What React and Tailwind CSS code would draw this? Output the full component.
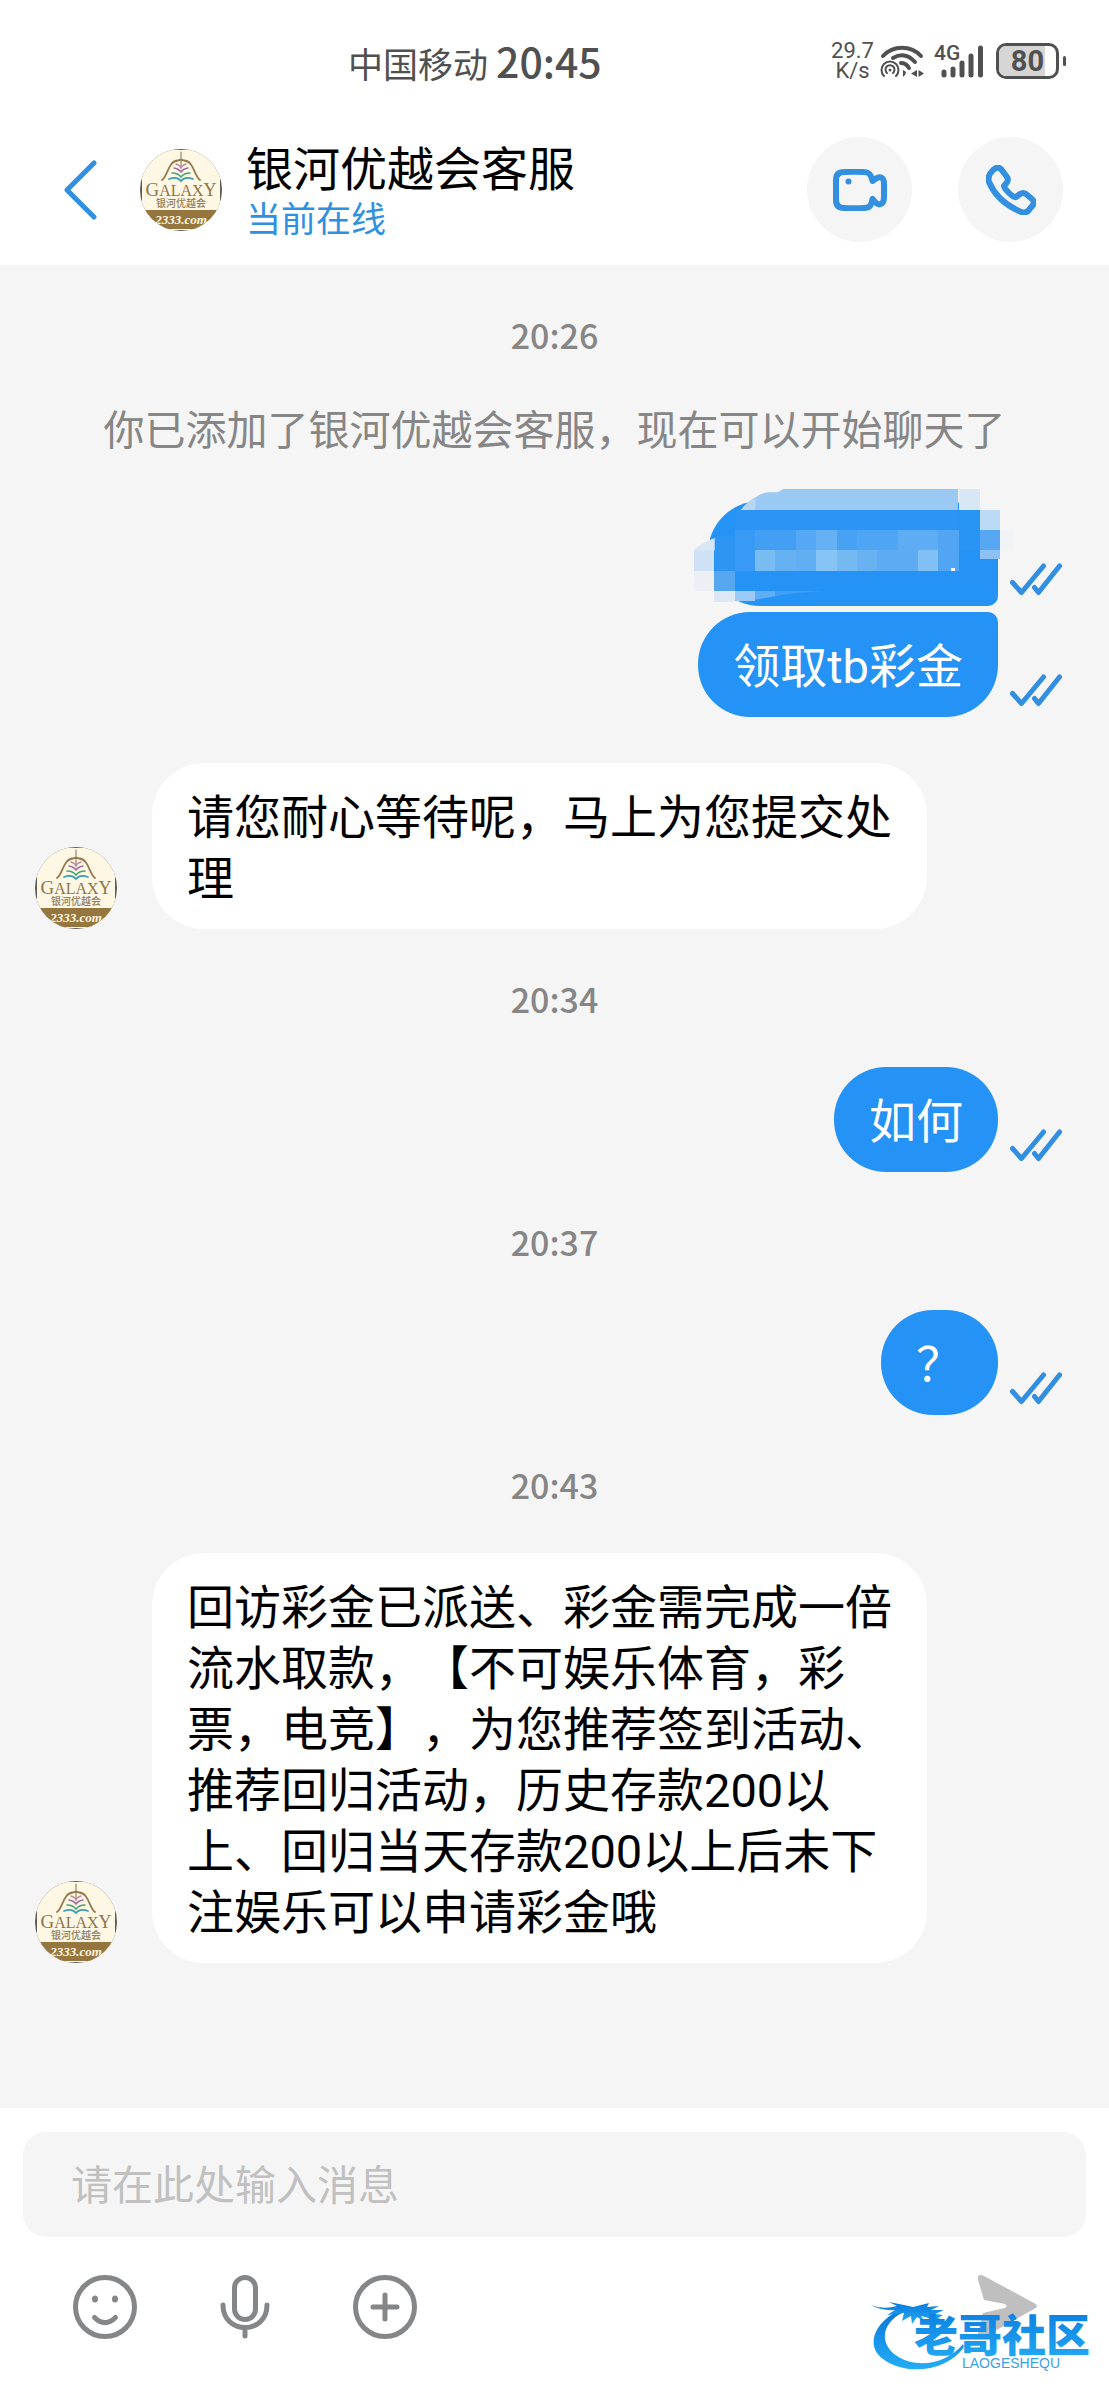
import { useId, useState } from 'react'

const contact = {
  name: '银河优越会客服',
  status: '当前在线',
}

const messages = [
  { id: 1, type: 'time', text: '20:26', gap: 'mt-[46px]' },
  { id: 2, type: 'system', text: '你已添加了银河优越会客服，现在可以开始聊天了', gap: 'mt-[38px]' },
  { id: 3, type: 'hidden', gap: 'mt-11' },
  { id: 4, type: 'out', text: '领取tb彩金', gap: 'mt-1.5', shape: 'rounded-[52px] rounded-tr-[10px]' },
  { id: 5, type: 'in', text: '请您耐心等待呢，马上为您提交处理', gap: 'mt-[46px]' },
  { id: 6, type: 'time', text: '20:34', gap: 'mt-[46px]' },
  { id: 7, type: 'out', text: '如何', gap: 'mt-11', shape: 'rounded-[52px]' },
  { id: 8, type: 'time', text: '20:37', gap: 'mt-[46px]' },
  { id: 9, type: 'out', text: '？', gap: 'mt-11', shape: 'rounded-[52px]' },
  { id: 10, type: 'time', text: '20:43', gap: 'mt-[46px]' },
  {
    id: 11,
    type: 'in',
    text: '回访彩金已派送、彩金需完成一倍流水取款，【不可娱乐体育，彩票，电竞】，为您推荐签到活动、推荐回归活动，历史存款200以上、回归当天存款200以上后未下注娱乐可以申请彩金哦',
    gap: 'mt-11',
  },
]

// [x, y, width, height, colour]
const mosaic = [
  [195, 18, 610, 63, '#9ac9f3'],
  [807, 18, 63, 63, '#d7e7f6'],
  [870, 81, 60, 61, '#bbdaf5'],
  [870, 142, 60, 60, '#58a7f2'],
  [870, 202, 60, 27, '#8dc1f3'],
  [930, 142, 40, 60, '#f0f4f7'],
  [12, 202, 61, 61, '#cfe1f5'],
  [12, 263, 61, 61, '#eceff3'],
  [73, 263, 61, 61, '#56a6f0'],
  [73, 324, 61, 33, '#dce8f5'],
  [134, 324, 61, 30, '#9ccaf4'],
  [134, 81, 671, 61, '#2b94f4'],
  [134, 142, 61, 121, '#389af4'],
  [195, 142, 122, 60, '#429ff4'],
  [317, 142, 62, 60, '#55a8f3'],
  [379, 142, 61, 60, '#66b1f4'],
  [440, 142, 61, 60, '#47a2f4'],
  [501, 142, 122, 60, '#4ea5f4'],
  [623, 142, 122, 60, '#5eadf4'],
  [745, 142, 62, 121, '#51a5f2'],
  [195, 202, 61, 61, '#79bcf2'],
  [256, 202, 61, 61, '#66b1f1'],
  [317, 202, 62, 61, '#61aff2'],
  [379, 202, 61, 61, '#86c4f5'],
  [440, 202, 61, 61, '#75b9f3'],
  [501, 202, 61, 61, '#69b2f1'],
  [562, 202, 122, 61, '#5dabf2'],
  [684, 202, 61, 61, '#80c0f4'],
]

function Avatar() {
  const clip = useId()
  return (
    <svg viewBox="0 0 82 82" className="size-[82px] shrink-0" role="img" aria-label={contact.name}>
      <defs>
        <clipPath id={clip}>
          <circle cx="41" cy="41" r="41" />
        </clipPath>
      </defs>
      <g clipPath={`url(#${clip})`}>
        <rect width="82" height="82" fill="#5d5a52" />
        <rect x="2" y="1" width="78" height="80" fill="#fdf7e4" />
        <rect x="2" y="61" width="78" height="19" fill="#96763f" />
        <g fill="none" strokeLinecap="round">
          <path d="M41 3V17" stroke="#9b8260" strokeWidth="1.2" />
          <path d="M22 31C28 27 28 12 38 11.500Q41 10 44 11.500C54 12 54 27 60 31" stroke="#94794f" strokeWidth="1.800" />
          <path d="M36 15Q40 16 41 19Q42 16 46 15" stroke="#b88aa0" strokeWidth="1.300" />
          <path d="M34 19Q39 20 41 23Q43 20 48 19" stroke="#a4679c" strokeWidth="1.400" />
          <path d="M32 24Q38 24 41 28Q44 24 50 24" stroke="#44a678" strokeWidth="1.600" />
          <path d="M29 30Q37 27 41 32Q45 27 53 30" stroke="#3a9fb4" strokeWidth="1.800" />
        </g>
        <text x="41" y="47" textAnchor="middle" fontFamily="Liberation Serif, serif" fill="#8f744a">
          <tspan fontSize="19">G</tspan>
          <tspan fontSize="16">ALAX</tspan>
          <tspan fontSize="18">Y</tspan>
        </text>
        <text x="41" y="58" textAnchor="middle" fontSize="10" fontWeight="500" fontFamily="Noto Sans CJK SC, sans-serif" fill="#937d5e">
          银河优越会
        </text>
        <text x="41" y="75" textAnchor="middle" fontSize="13" fontWeight="700" fontStyle="italic" fontFamily="Liberation Serif, serif" fill="#fff6df">
          2333.com
        </text>
      </g>
    </svg>
  )
}

function ReadTicks() {
  return (
    <svg viewBox="0 0 52 33" className="mb-2.5 w-[52px] h-[33px] shrink-0" fill="none" stroke="#318ee0" strokeWidth="5" strokeLinecap="round" strokeLinejoin="round">
      <path d="M2.500 19.500L11.500 29.500L33.500 3" />
      <path d="M24.500 24.500L28.500 29.500L49.500 3" />
    </svg>
  )
}

function HiddenBubble() {
  return (
    <div className="relative w-[290px] h-[105px] rounded-[52px] rounded-br-[10px] bg-[#2593f5]">
      <svg viewBox="0 0 981 381" className="absolute -left-[18px] -top-[18px] w-[327px] h-[127px]" shapeRendering="crispEdges">
        <rect x="200" y="81" width="670" height="120" fill="#2894f4" />
        <rect x="870" y="202" width="53" height="60" fill="#2593f5" />
        <rect x="74" y="160" width="70" height="105" fill="#2f95f3" />
        {mosaic.map(([x, y, w, h, fill]) => (
          <rect key={`${x}-${y}`} x={x} y={y} width={w} height={h} fill={fill} />
        ))}
        <g shapeRendering="auto">
          <path d="M193 16V46Q215 27 240 28L262 28L285 16Z" fill="#f5f5f5" />
          <path d="M152 81Q172 55 196 42V81Z" fill="#b6d6f4" />
          <path d="M12 202Q35 178 74 165V202Z" fill="#d9e6f3" />
          <path d="M195 324H256V340L195 350Z" fill="#5fadf4" />
          <path d="M256 324H400L315 330L256 340Z" fill="#3f9ff5" />
        </g>
        <rect x="782" y="254" width="12" height="11" fill="#f3f8fc" />
      </svg>
    </div>
  )
}

function Message({ message }) {
  const { type, text, gap, shape } = message

  if (type === 'time') {
    return <time className={`${gap} block text-center text-[34px] leading-[48px] font-medium text-[#868686]`}>{text}</time>
  }

  if (type === 'system') {
    return <p className={`${gap} text-center text-[41px] leading-[60px] text-[#868686]`}>{text}</p>
  }

  if (type === 'in') {
    return (
      <div className={`${gap} flex items-end gap-[35px] pl-[35px]`}>
        <Avatar />
        <p className="max-w-[775px] rounded-[52px] bg-white px-[35px] pt-6 pb-5 font-[Roboto,'Noto_Sans_CJK_SC',sans-serif] text-[47px] leading-[61px] text-black">
          {text}
        </p>
      </div>
    )
  }

  return (
    <div className={`${gap} flex items-end justify-end gap-3 pr-[47px]`}>
      {type === 'hidden' ? (
        <HiddenBubble />
      ) : (
        <p className={`${shape} bg-[#2593f5] px-[35px] pt-6 pb-5 font-[Roboto,'Noto_Sans_CJK_SC',sans-serif] text-[47px] leading-[61px] text-white`}>
          {text}
        </p>
      )}
      <ReadTicks />
    </div>
  )
}

function StatusBar() {
  return (
    <div className="relative h-[122px] flex items-center justify-end pr-[43px] text-[#505050]">
      <div className="absolute left-[348px] flex items-baseline gap-2">
        <span className="text-[35px] leading-[60px]">中国移动</span>
        <span className="text-[41px] leading-[60px] font-medium">20:45</span>
      </div>

      <div className="flex items-center">
        <div className="mr-1.5 text-center font-[Roboto,sans-serif] text-[22px] leading-5">
          <div>29.7</div>
          <div>K/s</div>
        </div>

        {/* Wifi with hotspot */}
        <svg viewBox="0 0 44 34" className="mr-2.5 w-11 h-[34px]" fill="none" stroke="currentColor" strokeLinecap="round">
          <path d="M3 12C13 1 31 1 41 12" strokeWidth="4" />
          <path d="M13 14Q25 7 35 18" strokeWidth="4" />
          <path d="M21 19Q26 19 29 24" strokeWidth="4" />
          <path d="M4 32A8.500 8.500 0 1 1 16 32" strokeWidth="2" />
          <path d="M7 29A4.500 4.500 0 1 1 13 29" strokeWidth="2" />
          <circle cx="10" cy="26" r="1.500" fill="currentColor" stroke="none" />
          <path d="M23 26Q29 28 23 33ZM37 26V33L31 29.500ZM38.500 26L44 29.500L38.500 33Z" fill="currentColor" stroke="none" />
        </svg>

        <div className="relative mr-3 w-[50px] h-[34px]">
          <span className="absolute left-0 top-0 font-[Roboto,sans-serif] text-[21px] leading-[18px] font-medium">4G</span>
          <svg viewBox="0 0 50 34" className="size-full" stroke="currentColor" strokeWidth="5" strokeLinecap="round">
            <path d="M10 28V31M19 25V31M28 19V31M37 12V31M46.500 4V31" />
          </svg>
        </div>

        {/* Battery */}
        <div className="relative w-[63px] h-9 rounded-[10px] border-3 border-current overflow-hidden flex items-center justify-center">
          <div className="absolute left-0 inset-y-0 bg-[#d6d6d6]" style={{ width: '80%' }} />
          <span className="relative font-[Roboto,sans-serif] text-[29px] leading-none font-bold">80</span>
        </div>
        <div className="ml-1 w-[3px] h-2.5 rounded-full bg-current" />
      </div>
    </div>
  )
}

function Header() {
  return (
    <header className="bg-white pb-2">
      <StatusBar />
      <div className="flex h-[135px] items-center pl-[63px] pr-[46px]">
        <button type="button" aria-label="返回" className="mr-[43px]">
          <svg viewBox="0 0 34 60" className="w-[34px] h-[60px]" fill="none" stroke="#2f90e2" strokeWidth="5" strokeLinecap="round" strokeLinejoin="round">
            <path d="M31 3L4 30L31 57" />
          </svg>
        </button>
        <Avatar />
        <div className="ml-6 flex-1 min-w-0">
          <h1 className="text-[47px] leading-[54px] text-black">{contact.name}</h1>
          <p className="text-[35px] leading-[48px] text-[#2f90e2]">{contact.status}</p>
        </div>
        <div className="flex gap-[46px] text-[#338fe0]">
          <button type="button" aria-label="视频通话" className="flex size-[105px] items-center justify-center rounded-full bg-[#f5f5f5]">
            <svg viewBox="0 0 54 42" className="w-[54px] h-[42px]" fill="none" stroke="currentColor" strokeWidth="6" strokeLinejoin="round">
              <path d="M11 3Q19 2.500 31 3C37 3 38.500 7 39.500 12L43 9.500C46 7.500 51 7 51 15V28C51 36 46 36.500 43 34L39.500 30C38.500 36 37 39 31 39Q19 39.500 11 39Q3 39 3 31V11Q3 3 11 3Z" />
              <circle cx="15.500" cy="12.500" r="3" fill="currentColor" stroke="none" />
            </svg>
          </button>
          <button type="button" aria-label="语音通话" className="flex size-[105px] items-center justify-center rounded-full bg-[#f5f5f5]">
            <svg viewBox="0 0 50 50" className="size-[50px]" fill="none" stroke="currentColor" strokeWidth="6" strokeLinejoin="round">
              <path d="M7 5L10 3Q12.500 2 15 4L21 12Q23 15 20.500 18L18 21Q18 23 23 28Q28 33 30 32L34 29Q37 27 40 29L46 34Q49 37 47 40L42 46Q38 49 33 46Q11 36 3 17Q1 11 7 5Z" />
            </svg>
          </button>
        </div>
      </div>
    </header>
  )
}

function Watermark() {
  return (
    <div className="absolute right-3 bottom-6 w-[228px] h-[78px]">
      <svg viewBox="0 0 228 78" className="absolute inset-0 size-full" aria-label="老哥社区" role="img">
        <defs>
          <linearGradient id="dragon" x1="0" y1="0" x2="0" y2="1">
            <stop offset="0" stopColor="#0877dd" />
            <stop offset="1" stopColor="#25adf5" />
          </linearGradient>
        </defs>
        <g fill="url(#dragon)">
          <path d="M31 12C5 24-4 48 14 61C36 78 78 74 95 49L94 46C78 66 48 71 28 58C9 45 13 24 35 14Z" />
          <path d="M2 7Q14 12 28 8L20 4L35 7L44 9L60 5L58 9L70 8L62 12L75 12L66 16L74 17L69 20L74 22L63 21L52 18L56 24L48 19L43 26L42 18L33 23L35 15L18 17L26 12Q12 13 2 7Z" />
        </g>
        <text x="45" y="54" fontSize="44" fontWeight="900" fontFamily="Noto Sans CJK SC, sans-serif" fill="url(#dragon)">
          老哥社区
        </text>
        <text x="93" y="70" fontSize="14" fontFamily="Liberation Sans, sans-serif" fill="#3aa0e8">
          LAOGESHEQU
        </text>
      </svg>
    </div>
  )
}

function Composer() {
  const [draft, setDraft] = useState('')

  return (
    <form className="relative h-[292px] bg-white px-[23px] pt-6" onSubmit={(e) => e.preventDefault()}>
      <input
        type="text"
        aria-label="请在此处输入消息"
        value={draft}
        onChange={(e) => setDraft(e.target.value)}
        placeholder="请在此处输入消息"
        className="block w-full h-[105px] rounded-[23px] bg-[#f5f5f5] px-12 pb-1.5 text-[41px] text-black placeholder:text-[#c0c0c0] outline-none"
      />
      <div className="mt-[38px] flex items-center gap-[76px] pl-[50px] pr-12 text-[#858688]">
        <button type="button" aria-label="表情">
          <svg viewBox="0 0 64 64" className="size-16" fill="none" stroke="currentColor" strokeWidth="5" strokeLinecap="round">
            <circle cx="32" cy="32" r="29.500" />
            <path d="M21.500 42.500Q32 53 42.500 42.500" />
            <g fill="currentColor" stroke="none">
              <ellipse cx="22" cy="24" rx="3" ry="3.500" />
              <ellipse cx="42" cy="24" rx="3" ry="3.500" />
            </g>
          </svg>
        </button>
        <button type="button" aria-label="语音">
          <svg viewBox="0 0 64 64" className="size-16" fill="none" stroke="currentColor" strokeWidth="5" strokeLinecap="round">
            <rect x="21.500" y="2.500" width="21" height="42" rx="10.500" />
            <path d="M10 30C10 60 54 60 54 30M32 54V61" />
          </svg>
        </button>
        <button type="button" aria-label="更多">
          <svg viewBox="0 0 64 64" className="size-16" fill="none" stroke="currentColor" strokeWidth="5" strokeLinecap="round">
            <circle cx="32" cy="32" r="29.500" />
            <path d="M32 20V44M20 32H44" />
          </svg>
        </button>
        <button type="submit" aria-label="发送" className="ml-auto text-[#bfbfbf]">
          <svg viewBox="0 0 64 64" className="size-16" fill="currentColor">
            <path d="M4 5Q3-2 10 1L60 28Q66 31 60 34L10 62Q3 65 4 58L9 38L31 33Q34 31 31 29L10 25Z" />
          </svg>
        </button>
      </div>
      <Watermark />
    </form>
  )
}

export default function App() {
  return (
    <div lang="zh-CN" className="flex min-h-screen flex-col bg-[#f5f5f5] font-['Noto_Sans_CJK_SC',sans-serif] [text-spacing-trim:space-all]">
      <Header />
      <main className="flex-1 pb-36">
        {messages.map((message) => (
          <Message key={message.id} message={message} />
        ))}
      </main>
      <Composer />
    </div>
  )
}
